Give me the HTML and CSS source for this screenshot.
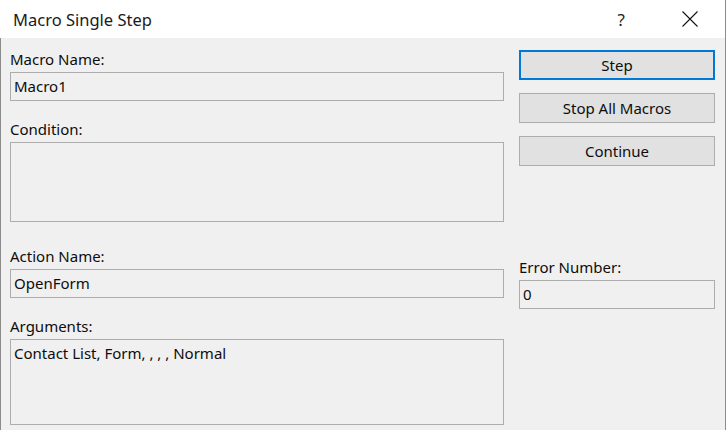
FILE: index.html
```html
<!DOCTYPE html>
<html lang="en">
<head>
<meta charset="utf-8">
<title>Macro Single Step</title>
<link rel="stylesheet" href="styles.css">
</head>
<body>
<div class="dialog">
  <header class="titlebar">
    <span class="title">Macro Single Step</span>
    <div class="title-buttons">
      <span class="help">?</span>
      <svg class="close" width="16" height="16" viewBox="0 0 16 16" aria-hidden="true">
        <path d="M0.5 0.5 L15.5 15.5 M15.5 0.5 L0.5 15.5" stroke="#111" stroke-width="1.1" fill="none"/>
      </svg>
    </div>
  </header>
  <main class="body">
    <section class="col-left">
      <label class="label">Macro Name:</label>
      <div class="field single">Macro1</div>

      <label class="label gap-sm">Condition:</label>
      <div class="field cond"></div>

      <label class="label gap-lg">Action Name:</label>
      <div class="field single">OpenForm</div>

      <label class="label gap-sm">Arguments:</label>
      <div class="field args">Contact List, Form, , , , Normal</div>
    </section>
    <section class="col-right">
      <button class="btn default">Step</button>
      <button class="btn">Stop All Macros</button>
      <button class="btn">Continue</button>

      <div class="error-group">
        <label class="label">Error Number:</label>
        <div class="field single">0</div>
      </div>
    </section>
  </main>
</div>
</body>
</html>
```
FILE: styles.css
```css
* { box-sizing: border-box; }

html, body {
  margin: 0;
  padding: 0;
  width: 726px;
  height: 430px;
  overflow: hidden;
  background: #f0f0f0;
}

.dialog {
  width: 726px;
  height: 430px;
  display: flex;
  flex-direction: column;
  font-family: "Noto Sans", "Open Sans", sans-serif;
  color: #0d0d0d;
  border-right: 1px solid #8c8c8c;
}

.titlebar {
  height: 38px;
  flex: none;
  background: #ffffff;
  display: flex;
  align-items: center;
  justify-content: space-between;
  padding-left: 13px;
}

.title {
  font-size: 16.5px;
  color: #1a1a1a;
}

.title-buttons {
  display: flex;
  align-items: center;
  gap: 57px;
  padding-right: 27px;
}

.help {
  font-size: 17px;
  color: #222;
  line-height: 1;
}

.close { display: block; }

.body {
  flex: 1;
  display: flex;
  gap: 15px;
  padding: 11px 10px 0 9px;
  border-left: 1px solid #8c8c8c;
}

.col-left {
  width: 494px;
  display: flex;
  flex-direction: column;
}

.col-right {
  width: 196px;
  display: flex;
  flex-direction: column;
  padding-top: 1px;
}

.label {
  display: block;
  font-size: 15px;
  line-height: 20px;
  height: 20px;
  margin-bottom: 3px;
}

.gap-sm { margin-top: 18px; }
.gap-lg { margin-top: 24px; }

.field {
  border: 1px solid #adadad;
  background: #f0f0f0;
  font-size: 15px;
  line-height: 20px;
  padding: 3px 3px 0 3px;
}

.field.single { height: 29px; }
.field.cond { height: 80px; }
.field.args { height: 86px; }

.btn {
  height: 30px;
  width: 100%;
  margin: 0 0 13px 0;
  padding: 0;
  background: #e1e1e1;
  border: 1px solid #adadad;
  font-family: inherit;
  font-size: 15px;
  color: #0d0d0d;
}

.btn.default {
  border: 2px solid #0078d7;
}

.error-group {
  margin-top: 78px;
}
```
